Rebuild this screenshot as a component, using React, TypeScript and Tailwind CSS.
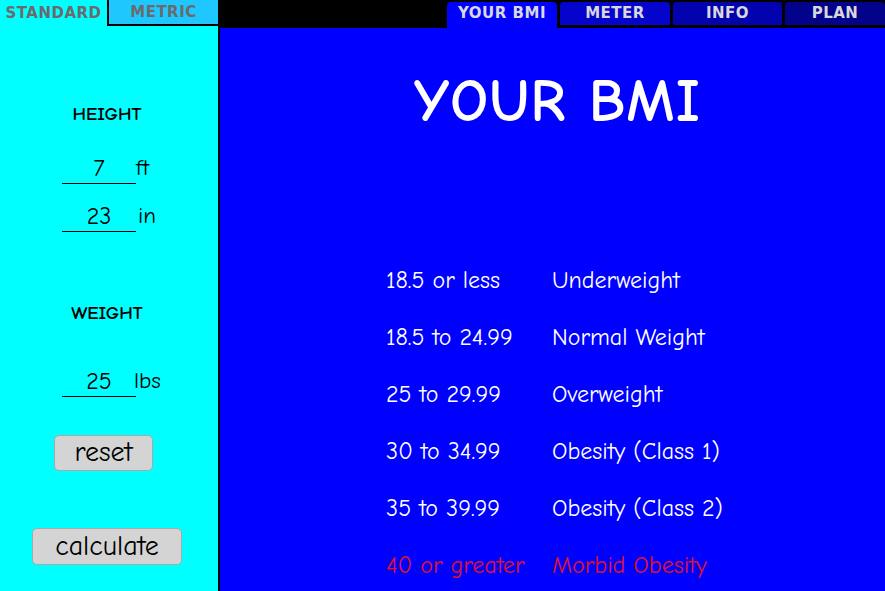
const comic = "font-['Comic_Sans_MS','Comic_Neue','DejaVu_Sans',sans-serif]"
const tabFont = "font-['DejaVu_Sans',sans-serif] font-black"

type Range = { range: string; label: string; alert?: boolean }

const ranges: Range[] = [
  { range: '18.5 or less', label: 'Underweight' },
  { range: '18.5 to 24.99', label: 'Normal Weight' },
  { range: '25 to 29.99', label: 'Overweight' },
  { range: '30 to 34.99', label: 'Obesity (Class 1)' },
  { range: '35 to 39.99', label: 'Obesity (Class 2)' },
  { range: '40 or greater', label: 'Morbid Obesity', alert: true },
]

function Field({ value, unit, unitGap }: { value: string; unit: string; unitGap: string }) {
  return (
    <div className="flex h-[30px] items-end">
      <div className="h-[30px] w-[74px] border-b border-black text-center text-[24px] leading-[28px]">{value}</div>
      <span className={`pb-[2px] text-[23px] leading-[28px] ${unitGap}`}>{unit}</span>
    </div>
  )
}

function TopTab({ label, color, width, active }: { label: string; color: string; width: string; active?: boolean }) {
  return (
    <div
      className={`flex items-center justify-center rounded-t-[4px] text-[15px] tracking-[0.5px] text-[#d8d8dc] ${tabFont} ${color} ${width} ${
        active ? 'h-[26px] pb-[3px]' : 'mb-[3px] h-[23px]'
      }`}
    >
      {label}
    </div>
  )
}

export default function App() {
  return (
    <div className={`flex h-[591px] w-[885px] overflow-hidden ${comic}`}>
      <aside className="flex w-[220px] shrink-0 flex-col border-r-2 border-black bg-[#00ffff] text-black">
        <div className="flex h-[26px] shrink-0">
          <div className={`flex w-[107px] items-center justify-center text-[15px] tracking-[0.5px] text-[#6b6b6b] ${tabFont}`}>
            STANDARD
          </div>
          <div
            className={`flex w-[111px] items-center justify-center border-b-2 border-l-2 border-black bg-[#1ec8ff] text-[15px] tracking-[0.5px] text-[#6b6b6b] ${tabFont}`}
          >
            METRIC
          </div>
        </div>

        <div className="flex flex-col">
          <div className="mt-[77px] pr-[4px] text-center text-[19px] font-bold leading-[22px]">HEIGHT</div>
          <div className="mt-[29px] pl-[62px]">
            <Field value="7" unit="ft" unitGap="ml-0" />
          </div>
          <div className="mt-[18px] pl-[62px]">
            <Field value="23" unit="in" unitGap="ml-[2px]" />
          </div>
          <div className="mt-[70px] pr-[4px] text-center text-[19px] font-bold leading-[22px]">WEIGHT</div>
          <div className="mt-[43px] pl-[62px]">
            <Field value="25" unit="lbs" unitGap="-ml-[2px]" />
          </div>
          <button
            type="button"
            className="ml-[54px] mt-[38px] h-[36px] w-[99px] rounded-[5px] border border-[#a8a8a8] bg-[#d4d4d4] pb-[2px] text-[28px] leading-none"
          >
            reset
          </button>
          <button
            type="button"
            className="ml-[32px] mt-[57px] h-[37px] w-[150px] rounded-[5px] border border-[#a8a8a8] bg-[#d4d4d4] pb-[2px] text-[28px] leading-none"
          >
            calculate
          </button>
        </div>
      </aside>

      <main className="flex flex-1 flex-col bg-[#0000ff] text-white">
        <div className="flex h-[28px] shrink-0 items-end justify-end gap-[3px] bg-black">
          <TopTab label="YOUR BMI" color="bg-[#0000ff]" width="w-[110px]" active />
          <TopTab label="METER" color="bg-[#0404cc]" width="w-[110px]" />
          <TopTab label="INFO" color="bg-[#0202ae]" width="w-[109px]" />
          <TopTab label="PLAN" color="bg-[#02028a]" width="w-[100px]" />
        </div>

        <h1 className="mt-[39px] h-[70px] pl-[10px] text-center text-[60px] font-bold leading-[70px] tracking-[1px]">
          YOUR BMI
        </h1>

        <div className="mt-[128px] flex flex-col gap-[27px] pl-[166px] text-[24px] leading-[30px]">
          {ranges.map(r => (
            <div key={r.range} className={`flex ${r.alert ? 'text-[#e0102a]' : ''}`}>
              <span className="w-[166px]">{r.range}</span>
              <span>{r.label}</span>
            </div>
          ))}
        </div>
      </main>
    </div>
  )
}
